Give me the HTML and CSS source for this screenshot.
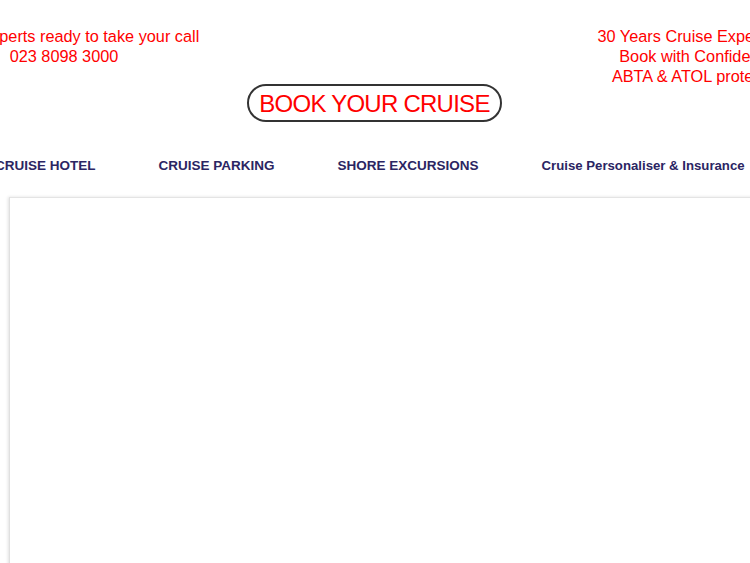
FILE: index.html
```html
<!DOCTYPE html>
<html lang="en">
    <head>
        <meta charset="utf-8">
        <title>Book Your Cruise</title>
        <link rel="stylesheet" href="styles.css">
    </head>
    <body>
    <div class="site">
        <div class="header">
            <div class="contact">
                <p>Cruise Experts ready to take your call</p>
                <p>023 8098 3000</p>
            </div>
            <a class="book" href="#">BOOK YOUR CRUISE</a>
            <div class="trust">
                <p>30 Years Cruise Experience</p>
                <p>Book with Confidence</p>
                <p>ABTA &amp; ATOL protected</p>
            </div>
        </div>
        <ul class="nav">
            <li><a href="#">CRUISE HOTEL</a></li>
            <li><a href="#">CRUISE PARKING</a></li>
            <li><a href="#">SHORE EXCURSIONS</a></li>
            <li><a class="small" href="#">Cruise Personaliser &amp; Insurance</a></li>
        </ul>
        <div class="panel"></div>
    </div>
    </body>
</html>
```

FILE: styles.css
```css
*{padding:0; margin:0; list-style:none; border:0;}
html, body{overflow:hidden; height:100%;}
body{background:#fff; font-family:"Liberation Sans", Arial, sans-serif;}
a{text-decoration:none;}

.site{width:980px; margin-left:calc(50% - 490px);}

.header{display:grid; grid-template-columns:300px 1fr 260px; padding:26px 36px 0 28px; color:#ff0000; font-size:16.3px; line-height:20px; text-align:center;}
.header p{white-space:nowrap;}
.contact{margin-left:2px;}
.trust{margin-left:-2px;}
.book{align-self:start; justify-self:center; margin-top:58px; margin-left:-33px; padding:0 10px; height:34px; line-height:35px; border:2px solid #333; border-radius:20px; color:#ff0000; font-size:24px; letter-spacing:-0.75px;}

.nav{display:flex; gap:63px; padding:34px 0 0 110px; height:32px;}
.nav a{color:#2b2563; font-size:13.5px; font-weight:bold; line-height:18px; white-space:nowrap;}
.nav a.small{font-size:13.2px;}

.panel{margin:9px 0 0 124px; width:900px; height:400px; border-top:1px solid #e4e4e4; border-left:1px solid #e0e0e0; box-shadow:-1px 0 3px rgba(0,0,0,0.12);}
```
